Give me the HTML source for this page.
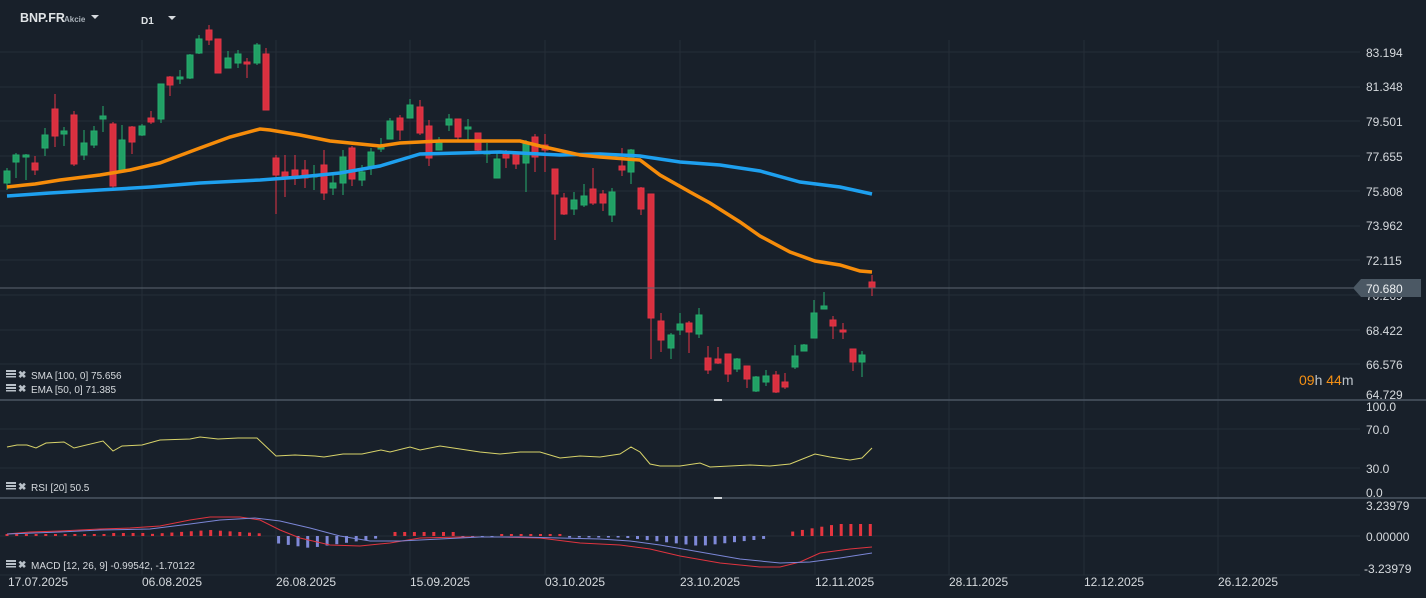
<!DOCTYPE html>
<html><head><meta charset="utf-8"><style>
html,body{margin:0;padding:0;background:#18202a;width:1426px;height:598px;overflow:hidden;font-family:"Liberation Sans",sans-serif}
svg text{font-family:"Liberation Sans",sans-serif}
</style></head><body>
<svg id="s" width="1426" height="598" xmlns="http://www.w3.org/2000/svg">
<rect width="1426" height="598" fill="#18202a"/>
<g id="grid" stroke="#252e38" stroke-width="1"></g>
<g id="c"></g>
<polyline fill="none" stroke="#1ea0ef" stroke-width="3.5" points="7,196 50,193 100,190 150,187 200,183 260,180 300,177 340,173 380,166 420,154 460,153 500,152 520,153 560,155 600,154 640,156 680,162 720,165 760,171 800,182 840,187 872,194"/>
<polyline fill="none" stroke="#f68c0a" stroke-width="3.5" points="7,187 25,185 35,184 60,180 100,175 130,170 160,163 200,148 230,137 260,129 270,130 300,135 330,141 360,144 380,146 400,143 420,142 440,141 480,141 520,141 540,146 580,155 600,157 640,160 660,175 690,192 710,203 740,222 760,236 790,252 815,261 840,265 860,271 872,272"/>
<line x1="0" y1="288" x2="1360" y2="288" stroke="#5b6570" stroke-width="1"/>
<line x1="0" y1="400" x2="1426" y2="400" stroke="#4a5562" stroke-width="1.5"/>
<line x1="0" y1="498" x2="1426" y2="498" stroke="#4a5562" stroke-width="1.5"/>
<rect x="714" y="399" width="8" height="2" fill="#cfd4d8"/>
<rect x="714" y="497" width="8" height="2" fill="#cfd4d8"/>
<polyline fill="none" stroke="#d8d36a" stroke-width="1" points="7,447 17,445 27,445 36,448 46,443 64,442 74,448 103,441 113,451 122,446 142,445 160,440 190,439 200,437 218,439 238,438 250,438 257,438 276,456 295,455 315,456 324,457 343,454 362,454 381,450 390,452 410,447 420,450 440,446 460,449 480,452 500,454 520,452 540,452 560,458 580,456 600,457 620,454 631,447 640,452 650,464 660,466 680,466 700,463 710,467 730,466 750,465 770,466 790,464 800,460 815,454 830,457 850,460 862,458 872,448"/>
<g id="h"></g>
<polyline fill="none" stroke="#e0343f" stroke-width="1" points="7,534 30,532 60,531 100,529 130,528 160,526 190,520 210,517 240,517 260,520 280,530 300,538 330,545 360,546 390,543 420,538 460,537 500,537 540,538 580,543 620,545 650,549 680,556 720,563 760,567 780,567 800,562 820,553 850,549 872,547"/>
<polyline fill="none" stroke="#7b86d6" stroke-width="1" points="7,534 60,532 100,530 150,529 190,524 220,520 255,518 280,521 310,528 340,536 370,541 400,541 440,539 480,537 520,537 560,538 600,539 630,541 660,545 700,552 740,559 780,563 810,562 840,558 872,553"/>
<g fill="#d6dade" font-size="12" id="ax"></g>
<text x="20" y="22" fill="#dfe3e6" font-size="12.5" font-weight="bold">BNP.FR</text>
<text x="64" y="22" fill="#a8b0b8" font-size="8" font-weight="bold">Akcie</text>
<path d="M91,15 h8 l-4,4z" fill="#d6dade"/>
<text x="141" y="24" fill="#dfe3e6" font-size="10" font-weight="bold">D1</text>
<path d="M168,16 h8 l-4,4z" fill="#d6dade"/>
<g fill="#d6dade" font-size="10">
<text x="31" y="379">SMA [100,  0] 75.656</text>
<text x="31" y="393">EMA [50,  0] 71.385</text>
<text x="31" y="491">RSI [20]  50.5</text>
<text x="31" y="569">MACD [12,  26,  9] -0.99542,  -1.70122</text>
</g>
<g id="ic" fill="#b8c0c8"></g>
<text x="1366" y="300" fill="#d6dade" font-size="12">70.269</text>
<path d="M1353,288 l8,-9 h60 v18 h-60z" fill="#4b5864"/>
<text x="1366" y="293" fill="#eef1f3" font-size="12">70.680</text>
<text x="1299" y="385" font-size="14" fill="#f59014">09<tspan fill="#bcc3ca">h </tspan>44<tspan fill="#bcc3ca">m</tspan></text>
</svg>
<script>
var NS="http://www.w3.org/2000/svg";
function el(p,t,a){var e=document.createElementNS(NS,t);for(var k in a)e.setAttribute(k,a[k]);document.getElementById(p).appendChild(e);return e;}
[142,276,410,545,680,815,949,1084,1218].forEach(function(x){el("grid","line",{x1:x,y1:40,x2:x,y2:575});});
[52,87,121,156,191,226,260,295,330,364,429,468,536,575].forEach(function(y){el("grid","line",{x1:0,y1:y,x2:1360,y2:y});});
var C=[[7,171,183,168,190,1],[16,155,162,153,178,1],[26,155,157,154,180,1],[35,163,170,156,175,0],[45,135,148,128,156,1],[55,109,136,94,147,0],[64,131,134,127,146,1],[74,115,164,111,166,0],[84,143,155,130,160,1],[94,131,145,126,148,1],[103,116,119,106,132,1],[113,124,186,122,190,0],[122,140,171,125,171,1],[132,127,142,126,154,0],[142,126,135,124,136,1],[151,118,122,111,124,0],[161,84,119,84,123,1],[170,77,85,76,96,0],[180,77,79,70,84,1],[190,55,78,54,79,1],[199,39,53,35,54,1],[209,30,40,25,45,0],[218,39,73,39,73,0],[228,58,68,51,68,1],[238,54,63,50,68,1],[247,62,64,58,78,0],[257,45,63,43,65,1],[266,54,110,48,110,0],[276,158,175,155,214,0],[285,172,179,155,197,0],[295,170,177,155,185,0],[305,170,178,160,188,0],[314,175,177,165,190,1],[324,165,193,150,200,0],[333,183,188,175,195,1],[343,157,183,150,195,1],[352,148,179,146,186,0],[362,172,180,165,186,1],[371,152,166,148,175,1],[381,147,148,138,152,1],[390,121,139,118,139,1],[400,118,130,115,140,0],[410,105,118,99,118,1],[420,107,133,100,135,0],[429,126,158,120,166,0],[439,143,150,137,150,1],[449,119,125,114,131,1],[458,119,137,119,142,0],[468,127,129,119,140,1],[478,133,150,133,152,0],[487,152,154,143,163,1],[497,159,178,152,178,1],[506,154,158,150,168,0],[516,153,164,153,169,0],[526,143,163,140,192,1],[535,137,157,134,172,0],[545,145,150,134,172,0],[555,169,194,169,240,0],[564,198,214,193,215,0],[574,200,209,192,215,1],[584,196,205,184,207,1],[593,189,203,168,205,0],[603,194,203,190,211,0],[612,192,215,188,222,1],[622,166,170,148,176,0],[631,150,172,149,184,1],[641,188,209,187,215,0],[651,194,318,194,359,0],[661,321,340,313,352,0],[671,335,348,333,359,1],[680,324,330,313,335,1],[689,323,332,321,353,0],[699,315,334,308,338,1],[708,358,370,346,374,0],[718,359,363,347,364,0],[728,354,374,354,382,0],[737,359,369,358,372,1],[747,366,379,366,388,0],[756,377,391,376,392,1],[766,376,382,370,386,1],[776,375,392,371,393,0],[785,382,387,373,389,0],[795,356,367,345,369,1],[804,345,351,344,351,1],[814,313,338,300,338,1],[824,306,309,292,309,1],[833,320,326,316,339,0],[843,330,332,323,339,0],[853,349,362,349,371,0],[862,355,362,351,377,1],[872,282,288,275,296,0]];
C.forEach(function(c){var col=c[5]?"#26ab6d":"#e23446";var fill=c[5]?"#21a065":"#d9303f";
el("c","line",{x1:c[0],y1:c[3],x2:c[0],y2:c[4],stroke:col,"stroke-width":1});
el("c","rect",{x:c[0]-3,y:c[1],width:6,height:Math.max(2,c[2]-c[1]),fill:fill,stroke:col,"stroke-width":1});});
for(var x=7;x<=872;x+=9.7){var v;
if(x<110)v=-2;else if(x<150)v=-3;else if(x<260)v=-6+Math.abs(x-210)/15;else if(x<270)v=0;
else if(x<380)v=12-Math.abs(x-310)/7;else if(x<390)v=0;else if(x<460)v=-4;else if(x<620)v=(x>500&&x<560)?-2:1;
else if(x<770)v=10-Math.abs(x-700)/9;else if(x<790)v=0;else v=-(4+Math.min(8,(x-790)/6));
if(v>0&&x>460&&x<620)v=1.5;
if(Math.abs(v)<0.5)continue;
if(v<0)el("h","rect",{x:x-1.5,y:536+v,width:3,height:-v,fill:"#e5353f"});
else el("h","rect",{x:x-1.5,y:536,width:3,height:v,fill:"#7f89d8"});}
var L=[["83.194",57],["81.348",91],["79.501",126],["77.655",161],["75.808",196],["73.962",230],["72.115",265],["68.422",335],["66.576",369],["64.729",399],["100.0",411],["70.0",434],["30.0",473],["0.0",497],["3.23979",510],["0.00000",541],["-3.23979",573]];
L.forEach(function(l){var t=el("ax","text",{x:l[0][0]=="-"?1364:1366,y:l[1]});t.textContent=l[0];});
var D=[["17.07.2025",8],["06.08.2025",142],["26.08.2025",276],["15.09.2025",410],["03.10.2025",545],["23.10.2025",680],["12.11.2025",815],["28.11.2025",949],["12.12.2025",1084],["26.12.2025",1218]];
D.forEach(function(d){var t=el("ax","text",{x:d[1],y:586});t.textContent=d[0];});
[370,384,482,560].forEach(function(y){el("ic","rect",{x:6,y:y,width:10,height:2});el("ic","rect",{x:6,y:y+3,width:10,height:2});el("ic","rect",{x:6,y:y+6,width:10,height:1.5});
var t=el("ic","text",{x:18,y:y+8,"font-size":"10","font-weight":"bold"});t.textContent="✖";});
</script>
</body></html>
